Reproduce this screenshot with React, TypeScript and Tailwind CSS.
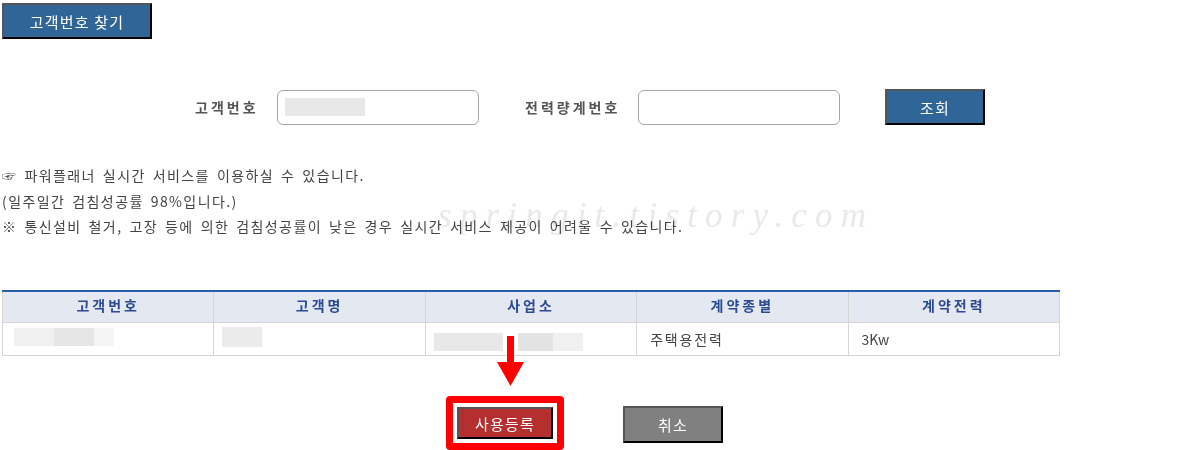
const font = "font-['Noto_Sans_CJK_KR','Liberation_Sans',sans-serif]";

function DarkButton({ children, className }: { children: React.ReactNode; className: string }) {
  return (
    <button
      className={`border-2 border-t-[#555555] border-l-[#555555] border-r-black border-b-black text-[15px] leading-none tracking-[1.2px] text-white ${className}`}
    >
      {children}
    </button>
  );
}

const columns = ["고객번호", "고객명", "사업소", "계약종별", "계약전력"];

export default function App() {
  return (
    <div className={`relative h-[450px] w-[1184px] overflow-hidden bg-white text-[#444444] ${font}`}>
      <div className="pl-[2px] pt-[3px]">
        <DarkButton className="h-[36px] w-[150px] bg-[#306597]">고객번호 찾기</DarkButton>
      </div>

      <div className="mt-[50px] flex h-[36px] items-center pl-[195px]">
        <label className="w-[82px] text-[14px] font-bold tracking-[3px] text-[#555555]">고객번호</label>
        <div className="flex h-[35px] w-[202px] items-center rounded-[6px] border border-[#a6a6a6] px-[7px]">
          <span className="h-[18px] w-[80px] bg-[#e8e8e8]" />
        </div>
        <label className="ml-[46px] w-[113px] text-[14px] font-bold tracking-[3px] text-[#555555]">전력량계번호</label>
        <input className="h-[35px] w-[202px] rounded-[6px] border border-[#a6a6a6]" />
        <DarkButton className="ml-[45px] h-[36px] w-[100px] bg-[#306597]">조회</DarkButton>
      </div>

      <div className="mt-[38px] pl-[2px] text-[14px] leading-[25.5px] tracking-[1.4px] text-[#444444] [word-spacing:2.5px]">
        <p>☞ 파워플래너 실시간 서비스를 이용하실 수 있습니다.</p>
        <p>(일주일간 검침성공률 98%입니다.)</p>
        <p>※ 통신설비 철거, 고장 등에 의한 검침성공률이 낮은 경우 실시간 서비스 제공이 어려울 수 있습니다.</p>
      </div>

      <div className="ml-[2px] mt-[50px] w-[1058px]">
        <table className="w-full table-fixed border-collapse border-t-2 border-t-[#2a5caa]">
          <thead>
            <tr className="h-[32px] bg-[#e4e8f1]">
              {columns.map((c) => (
                <th
                  key={c}
                  className="border border-t-0 border-[#d5d5d5] pb-[2px] text-center text-[14px] font-bold tracking-[3px] text-[#2b4a92]"
                >
                  {c}
                </th>
              ))}
            </tr>
          </thead>
          <tbody>
            <tr className="h-[33px] text-[14px] text-[#444444]">
              <td className="border border-[#d5d5d5] pl-[11px] align-top">
                <div className="mt-[5px] flex h-[18px]">
                  <span className="w-[40px] bg-[#f0f0f0]" />
                  <span className="w-[40px] bg-[#e6e6e6]" />
                  <span className="w-[20px] bg-[#f5f5f5]" />
                </div>
              </td>
              <td className="border border-[#d5d5d5] pl-[8px] align-top">
                <div className="mt-[4px] h-[20px] w-[40px] bg-[#ebebeb]" />
              </td>
              <td className="border border-[#d5d5d5] pl-[8px] align-top">
                <div className="mt-[10px] flex h-[18px]">
                  <span className="w-[69px] bg-[#e8e8e8]" />
                  <span className="ml-[15px] w-[35px] bg-[#e3e3e3]" />
                  <span className="w-[30px] bg-[#f0f0f0]" />
                </div>
              </td>
              <td className="border border-[#d5d5d5] pl-[13px] tracking-[1.8px]">주택용전력</td>
              <td className="border border-[#d5d5d5] pl-[13px]">3Kw</td>
            </tr>
          </tbody>
        </table>
      </div>

      <div className="mt-[40px] flex items-start pl-[446px]">
        <div className="rounded-[4px] border-[7px] border-[#ff0000] bg-white p-[4px]">
          <DarkButton className="block h-[32px] w-[96px] border-b-[#555555] border-r-[#555555] bg-[#b52f2f]">사용등록</DarkButton>
        </div>
        <DarkButton className="ml-[59px] mt-[10px] h-[37px] w-[100px] bg-[#808080]">취소</DarkButton>
      </div>

      {/* arrow over the table */}
      <svg className="absolute left-[490px] top-[330px]" width="40" height="60" viewBox="0 0 40 60">
        <path d="M17 6h7v26h-7z" fill="#ff0000" />
        <path d="M7 32h27L20.500 56z" fill="#ff0000" />
      </svg>

      {/* watermark */}
      <div className="pointer-events-none absolute left-[438px] top-[196px] font-['Liberation_Serif',serif] text-[35px] italic leading-[40px] tracking-[8.2px] text-[#e9e9e9] mix-blend-multiply">
        springit.tistory.com
      </div>
    </div>
  );
}
